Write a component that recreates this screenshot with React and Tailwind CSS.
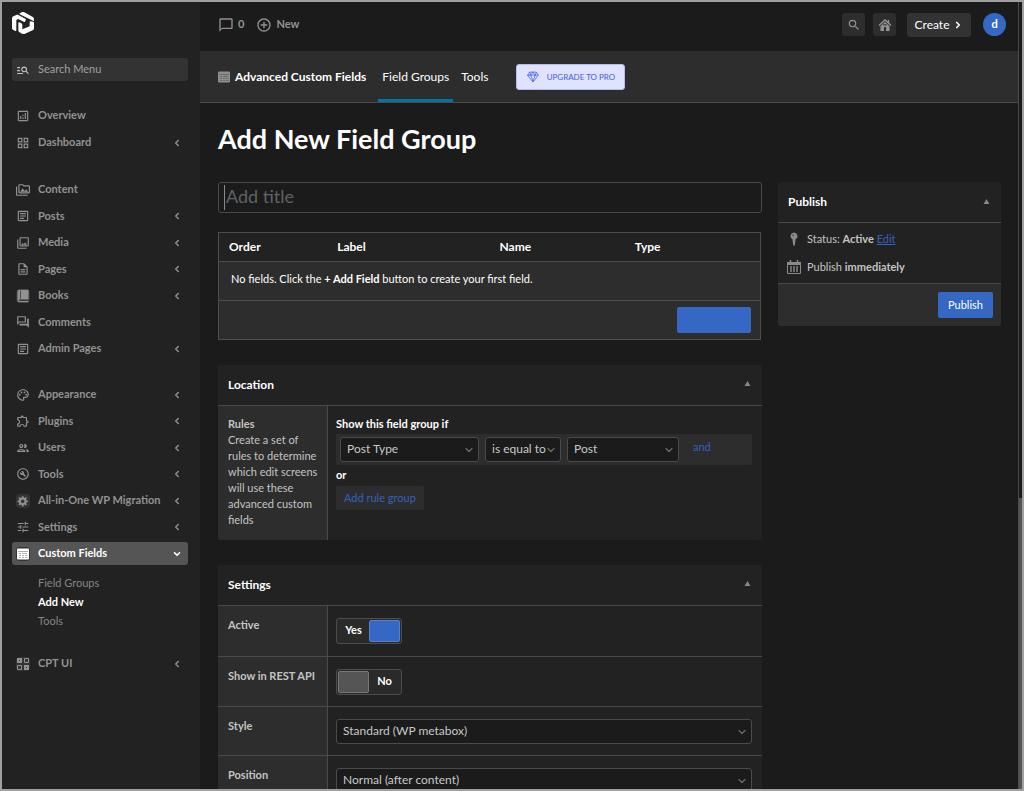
import React from "react";
import {
  MdManageSearch,
  MdOutlineAnalytics,
  MdGridView,
  MdOutlinePermMedia,
  MdOutlineArticle,
  MdOutlinePhotoLibrary,
  MdOutlineDescription,
  MdOutlineForum,
  MdOutlinePalette,
  MdOutlineExtension,
  MdOutlinePeople,
  MdOutlineBuildCircle,
  MdTune,
  MdChatBubbleOutline,
  MdAddCircleOutline,
  MdSearch,
} from "react-icons/md";
import { IoDiamondOutline } from "react-icons/io5";
import { ChevronLeft, ChevronDown, ChevronRight } from "lucide-react";

function Logo() {
  return (
    <svg viewBox="0 0 66 66" className="h-[22px] w-[22px]" fill="#fff" aria-hidden="true">
      <path d="M0 20c0-3 1-5 4-7l9-4c2-1 4-1 6 0l21 11c2 1 2 3 1 5l-2 4c-1 1-2 1-4 0L18 21l-5 3v31c0 2-1 3-3 2l-6-3c-3-2-4-4-4-7z" />
      <path d="M23 4l6-3c3-1 5-1 8 0l24 13c3 2 5 4 5 8v3c0 2-1 2-3 1L23 7c-1-1-1-2 0-3z" />
      <path d="M66 32v15c0 4-1 6-4 8L39 65c-3 2-6 2-9 0l-7-4c-3-2-4-4-4-8V33c0-2 1-3 3-2l6 3c2 1 3 3 3 6v12l22-9V30c0-2 1-3 3-2l7 1c2 0 3 1 3 3z" />
    </svg>
  );
}

function BookIcon() {
  return (
    <svg viewBox="0 0 20 20" className="h-3.5 w-3.5" fill="currentColor" aria-hidden="true">
      <path d="M5 17h13v2H5c-1.66 0-3-1.34-3-3V4c0-1.66 1.34-3 3-3h13v14H5c-.55 0-1 .45-1 1s.45 1 1 1zm2-3.5v-11c0-.28-.22-.5-.5-.5s-.5.22-.5.5v11c0 .28.22.5.5.5s.5-.22.5-.5z" />
    </svg>
  );
}

function GearIcon() {
  return (
    <svg viewBox="0 0 20 20" className="h-3 w-3" fill="currentColor" aria-hidden="true">
      <path d="M18 12h-2.18c-.17.7-.44 1.35-.81 1.93l1.54 1.54-2.1 2.1-1.54-1.54c-.58.36-1.23.63-1.91.79V19H8v-2.18c-.68-.16-1.33-.43-1.91-.79l-1.54 1.54-2.12-2.12 1.54-1.54c-.36-.58-.63-1.23-.79-1.91H1V9.03h2.17c.16-.7.44-1.35.8-1.94L2.43 5.55l2.1-2.1 1.54 1.54c.58-.37 1.24-.64 1.93-.81V2h3v2.18c.68.16 1.33.43 1.91.79l1.54-1.54 2.12 2.12-1.54 1.54c.36.59.64 1.24.8 1.94H18V12zm-8.5 1.5c1.66 0 3-1.34 3-3s-1.34-3-3-3-3 1.34-3 3 1.34 3 3 3z" />
    </svg>
  );
}

function FieldsIcon() {
  return (
    <svg viewBox="0 0 12 12" className="h-3 w-3 shrink-0" aria-hidden="true">
      <rect width="12" height="11" y=".5" rx="1" fill="currentColor" />
      <g stroke="#222" strokeOpacity=".45">
        <path d="M1 3.5h10M2 5.5h2M5 5.5h5M2 7.5h2M5 7.5h2M2 9.5h2M5 9.5h2M8 7.5h2.5M8 9.5h2.5" strokeWidth=".8" />
      </g>
    </svg>
  );
}

function BlocksIcon() {
  return (
    <svg viewBox="0 0 12 12" className="h-3 w-3" aria-hidden="true">
      <path d="M0 0h5v5H0zM7 7h5v5H7z" fill="currentColor" />
      <path d="M7.5.5h4v4h-4zM.5 7.5h4v4h-4z" fill="none" stroke="currentColor" />
      <path d="M2 2.5h1M9 9.5h1" stroke="#333" />
    </svg>
  );
}

function HomeIcon() {
  return (
    <svg viewBox="0 0 20 20" className="h-3.5 w-3.5" fill="currentColor" aria-hidden="true">
      <path d="M10 1.5l4 3.6V3h2v3.9l3.3 3-1.3 1.4L10 4.2 2 11.3.7 9.9z" />
      <path d="M10 5.8l6.5 5.9v6.8h-5V13h-3v5.500h-5v-6.800z" />
      <path d="M7.5 9h5v1.5h-5z" fill="#2a2a2a" />
    </svg>
  );
}

function PinIcon() {
  return (
    <svg viewBox="0 0 14 14" className="h-3.5 w-3.5" fill="#8a8a8a" aria-hidden="true">
      <path d="M7 .5a3.5 3.5 0 0 1 1.6 6.6L7.8 13.5H6.2L5.4 7.1A3.5 3.5 0 0 1 7 .5z" />
      <circle cx="6.2" cy="3.2" r="1" fill="#555" />
    </svg>
  );
}

function CalendarIcon() {
  return (
    <svg viewBox="0 0 14 14" className="h-3.5 w-3.5" aria-hidden="true">
      <path d="M.5 4.5h13v9H.5z" fill="none" stroke="#8a8a8a" />
      <path d="M0 2h14v2.5H0z" fill="#8a8a8a" />
      <path d="M3.5 0v3M10.5 0v3" stroke="#8a8a8a" strokeWidth="1.5" />
      <path d="M4 6v6M7 6v6M10 6v6" stroke="#8a8a8a" strokeWidth="1.4" />
    </svg>
  );
}

const boxed = "flex h-3.5 w-3.5 items-center justify-center rounded-sm bg-[#343434]";

const md = (Icon) => <Icon className="h-3.5 w-3.5" />;

const groups = [
  {
    height: "h-[50px] mt-[23px]",
    items: [
      { label: "Overview", icon: md(MdOutlineAnalytics) },
      { label: "Dashboard", icon: md(MdGridView), more: true },
    ],
  },
  {
    height: "h-[182px] mt-6",
    items: [
      { label: "Content", icon: md(MdOutlinePermMedia) },
      { label: "Posts", icon: md(MdOutlineArticle), more: true },
      { label: "Media", icon: md(MdOutlinePhotoLibrary), more: true },
      { label: "Pages", icon: md(MdOutlineDescription), more: true },
      { label: "Books", icon: <span className={boxed}><BookIcon /></span>, more: true },
      { label: "Comments", icon: md(MdOutlineForum) },
      { label: "Admin Pages", icon: md(MdOutlineArticle), more: true },
    ],
  },
  {
    height: "h-[182px] mt-[23px]",
    items: [
      { label: "Appearance", icon: md(MdOutlinePalette), more: true },
      { label: "Plugins", icon: md(MdOutlineExtension), more: true },
      { label: "Users", icon: md(MdOutlinePeople), more: true },
      { label: "Tools", icon: md(MdOutlineBuildCircle), more: true },
      { label: "All-in-One WP Migration", icon: <span className={boxed}><GearIcon /></span>, more: true },
      { label: "Settings", icon: md(MdTune), more: true },
      { label: "Custom Fields", icon: <span className="flex h-3.5 w-3.5 items-center justify-center rounded-sm bg-[#333] text-white"><FieldsIcon /></span>, active: true },
    ],
  },
];

function NavItem({ label, icon, more, active }) {
  return (
    <li>
      <a
        href="#"
        className={`flex h-[23px] items-center rounded-[3px] pr-1.5 pl-1 text-[11px] font-bold ${active ? "bg-[#555] text-white" : "text-[#929292]"}`}
      >
        <span className="flex w-[22px] shrink-0 items-center">{icon}</span>
        <span className="flex-1 whitespace-nowrap">{label}</span>
        {more && <ChevronLeft className="h-2.5 w-2.5" strokeWidth={3.5} />}
        {active && <ChevronDown className="h-2.5 w-2.5" strokeWidth={4} />}
      </a>
    </li>
  );
}

function Sidebar() {
  return (
    <aside className="w-[198px] shrink-0 bg-[#222] pt-2.5 pr-3 pl-2.5">
      <a href="#" aria-label="Home" className="block w-[22px]"><Logo /></a>
      <label className="mt-6 flex h-[23px] items-center rounded-[3px] bg-[#333] pl-1 text-[#c4c4c4]">
        <span className="flex w-[22px] shrink-0"><MdManageSearch className="h-3.5 w-3.5" /></span>
        <input
          type="search"
          aria-label="Search Menu"
          placeholder="Search Menu"
          className="w-full min-w-0 bg-transparent text-[11px] outline-none placeholder:text-[#a0a0a0]"
        />
      </label>
      <nav>
        {groups.map((g) => (
          <ul key={g.items[0].label} className={`flex flex-col justify-between ${g.height}`}>
            {g.items.map((item) => <NavItem key={item.label} {...item} />)}
          </ul>
        ))}
        <ul className="mt-2 pl-[26px] text-[11px] leading-[19px] text-[#858585]">
          <li><a href="#">Field Groups</a></li>
          <li><a href="#" className="font-bold text-white">Add New</a></li>
          <li><a href="#">Tools</a></li>
        </ul>
        <ul className="mt-[22px]">
          <NavItem label="CPT UI" icon={<span className={boxed}><BlocksIcon /></span>} more />
        </ul>
      </nav>
    </aside>
  );
}

function TopBar() {
  return (
    <header className="flex h-[49px] shrink-0 items-center pr-3 pb-1 pl-[18px] text-[12px] font-bold text-[#929292]">
      <a href="#" className="flex items-center gap-1 text-[11px]"><MdChatBubbleOutline className="h-4 w-4" />0</a>
      <a href="#" className="ml-3 flex items-center gap-1 text-[11px]"><MdAddCircleOutline className="h-4 w-4" />New</a>
      <div className="ml-auto flex items-center">
        <button type="button" aria-label="Search" className="flex h-[23px] w-[23px] items-center justify-center rounded-[3px] bg-[#2d2d2d]"><MdSearch className="h-3.5 w-3.5" /></button>
        <a href="#" aria-label="Visit site" className="ml-2 flex h-[23px] w-[23px] items-center justify-center rounded-[3px] bg-[#2d2d2d]"><HomeIcon /></a>
        <button type="button" className="ml-[11px] flex h-6 w-16 items-center justify-center gap-1 rounded-[3px] bg-[#333] font-normal text-white">
          Create <ChevronRight className="h-2.5 w-2.5" strokeWidth={4} />
        </button>
        <button type="button" aria-label="Account" className="ml-3 flex h-[23px] w-[23px] items-center justify-center rounded-full bg-[#3568c4] text-[11px] text-white">d</button>
      </div>
    </header>
  );
}

function PluginBar() {
  return (
    <div className="flex h-[52px] shrink-0 items-center border-b border-[#4a4a4a] bg-[#2d2d2d] pl-[18px] text-[12px] text-white">
      <span className="text-[#8f8f8f]"><FieldsIcon /></span>
      <h2 className="ml-[5px] font-bold">Advanced Custom Fields</h2>
      <a href="#" className="ml-3 flex h-full items-center border-b-3 border-[#0873a3] px-1 pt-[3px]">Field Groups</a>
      <a href="#" className="ml-1 px-1">Tools</a>
      <a href="#" className="ml-6 flex h-[26px] w-[109px] items-center justify-center gap-2 rounded-[3px] border border-[#b4bdf0] bg-[#dfe3ff] text-[8px] text-[#4560e0]">
        <IoDiamondOutline className="h-3 w-3" />
        UPGRADE TO PRO
      </a>
    </div>
  );
}

function Panel({ title, children }) {
  return (
    <section className="overflow-hidden rounded-[3px] bg-[#222]">
      <div className="flex h-[41px] items-center justify-between border-b border-[#4a4a4a] pr-[11px] pl-2.5">
        <h2 className="text-[12px] font-bold text-white">{title}</h2>
        <button type="button" aria-label={`Toggle panel: ${title}`} className="pb-0.5 text-[#85888c]">
          <svg viewBox="0 0 7 6" className="h-[5px] w-[7px]" fill="currentColor" aria-hidden="true"><path d="M3.5 0L7 6H0z" /></svg>
        </button>
      </div>
      {children}
    </section>
  );
}

function SelectBox({ label, value, className }) {
  return (
    <span className={`relative block ${className}`}>
      <select aria-label={label} defaultValue={value} className="block h-[25px] w-full appearance-none rounded-[3px] border border-[#4a4a4a] bg-[#1b1b1b] pl-1.5 text-[12px] text-[#c8c8c8]">
        <option>{value}</option>
      </select>
      <ChevronDown className="pointer-events-none absolute top-[7px] right-1 h-3 w-3 text-[#6a6a6a]" strokeWidth={2.5} />
    </span>
  );
}

function FieldTable() {
  return (
    <div className="mt-[19px] mr-px border border-[#4d4d4d] bg-[#2d2d2d] text-[12px] text-white">
      <table className="w-full table-fixed border-collapse text-left">
        <thead className="bg-[#222]">
          <tr className="h-7 border-b border-[#4d4d4d]">
            <th className="w-1/5 pl-2.5 font-bold">Order</th>
            <th className="w-[30%] pl-2.5 font-bold">Label</th>
            <th className="w-1/4 pl-2.5 font-bold">Name</th>
            <th className="w-1/4 pl-2.5 font-bold">Type</th>
          </tr>
        </thead>
        <tbody>
          <tr className="h-[39px] border-b border-[#4d4d4d]">
            <td colSpan={4} className="pb-0.5 pl-3 text-[11px]">No fields. Click the <strong>+ Add Field</strong> button to create your first field.</td>
          </tr>
        </tbody>
      </table>
      <div className="flex h-[38px] items-center justify-end pr-[9px]">
        <button type="button" aria-label="Add Field" className="h-[26px] w-[74px] rounded-[2px] bg-[#3568c4]" />
      </div>
    </div>
  );
}

function Toggle({ label, on }) {
  return (
    <label className="flex h-[26px] w-[66px] items-center rounded-[3px] border border-[#4d4d4d] bg-[#2a2a2a] p-px text-[11px] text-white">
      <input type="checkbox" role="switch" aria-label={label} defaultChecked={on} className="sr-only" />
      {on && <span className="flex-1 text-center font-bold">Yes</span>}
      <span className={`h-full w-[31px] rounded-[2px] border ${on ? "border-[#5580cc] bg-[#3568c4]" : "border-[#777] bg-[#555]"}`} />
      {!on && <span className="flex-1 text-center font-bold">No</span>}
    </label>
  );
}

function SettingRow({ label, children, height }) {
  return (
    <div className={`flex border-b border-[#4a4a4a] ${height}`}>
      <div className="w-[110px] shrink-0 border-r border-[#4a4a4a] bg-[#2d2d2d] pt-[11px] pl-2.5 text-[11px] leading-4 font-bold whitespace-nowrap text-[#c4c4c4]">{label}</div>
      <div className="flex-1 pt-3 pr-2.5 pl-2">{children}</div>
    </div>
  );
}

function LocationPanel() {
  return (
    <Panel title="Location">
      <div className="flex">
        <div className="w-[110px] shrink-0 border-r border-[#4a4a4a] bg-[#2d2d2d] pt-2.5 pr-1.5 pb-3 pl-2.5 text-[11px] leading-4 text-[#c4c4c4]">
          <h3 className="font-bold">Rules</h3>
          <p>Create a set of rules to determine which edit screens will use these advanced custom fields</p>
        </div>
        <div className="flex-1 pt-2.5 pr-2.5 pl-2 text-[11px] leading-4 text-white">
          <h4 className="font-bold">Show this field group if</h4>
          <div className="mt-0.5 flex h-[31px] items-center gap-1.5 rounded-[2px] bg-[#2d2d2d] pl-1">
            <SelectBox label="Parameter" value="Post Type" className="w-[139px]" />
            <SelectBox label="Operator" value="is equal to" className="w-[76px]" />
            <SelectBox label="Value" value="Post" className="w-28" />
            <button type="button" className="ml-2 pb-1 text-[#3561bd]">and</button>
          </div>
          <h4 className="mt-0.5 font-bold">or</h4>
          <button type="button" className="mt-[3px] h-6 rounded-[2px] bg-[#2d2d2d] px-2 text-[#3561bd]">Add rule group</button>
        </div>
      </div>
    </Panel>
  );
}

function SettingsPanel() {
  return (
    <Panel title="Settings">
      <SettingRow label="Active" height="h-[51px]"><Toggle label="Active" on /></SettingRow>
      <SettingRow label="Show in REST API" height="h-[50px]"><Toggle label="Show in REST API" /></SettingRow>
      <SettingRow label="Style" height="h-[49px]"><SelectBox label="Style" value="Standard (WP metabox)" className="w-full" /></SettingRow>
      <SettingRow label="Position" height="h-[49px]"><SelectBox label="Position" value="Normal (after content)" className="w-full" /></SettingRow>
    </Panel>
  );
}

function PublishPanel() {
  return (
    <Panel title="Publish">
      <div className="flex h-[61px] flex-col justify-between border-b border-[#4a4a4a] px-[9px] py-2 text-[11px] leading-4 text-[#c4c4c4]">
        <p className="flex items-center gap-1.5"><PinIcon /><span>Status: <strong>Active</strong> <a href="#" className="text-[#3561bd] underline">Edit</a></span></p>
        <p className="flex items-center gap-1.5"><CalendarIcon /><span>Publish <strong>immediately</strong></span></p>
      </div>
      <div className="flex h-[42px] items-center justify-end bg-[#2d2d2d] px-2">
        <button type="button" className="h-[26px] w-[55px] rounded-[2px] bg-[#3568c4] text-[11px] text-white">Publish</button>
      </div>
    </Panel>
  );
}

export default function App() {
  return (
    <div className="flex h-screen overflow-hidden border-2 border-[#a0a0a0] bg-[#1b1b1b] font-['Lato','Open_Sans',sans-serif]">
      <Sidebar />
      <div className="flex min-w-0 flex-1 flex-col overflow-hidden">
        <TopBar />
        <PluginBar />
        <main className="pt-[18px] pr-[17px] pl-[18px]">
          <h1 className="text-[27px] leading-9 font-bold text-white">Add New Field Group</h1>
          <div className="mt-[25px] flex items-start gap-4">
            <div className="min-w-0 flex-1">
              <div className="relative">
                <input
                  type="text"
                  aria-label="Add title"
                  placeholder="Add title"
                  className="block h-[31px] w-full rounded-[3px] border border-[#484848] bg-transparent px-[7px] pb-1 text-[18px] text-white outline-none placeholder:text-[#5f6266]"
                />
                <span aria-hidden="true" className="absolute top-[3px] left-1.5 h-[25px] w-px bg-[#8a8a8a]" />
              </div>
              <FieldTable />
              <div className="mt-[25px] flex flex-col gap-[25px]">
                <LocationPanel />
                <SettingsPanel />
              </div>
            </div>
            <aside className="w-[223px] shrink-0"><PublishPanel /></aside>
          </div>
        </main>
      </div>
      <div aria-hidden="true" className="w-1 shrink-0 border-l border-[#4a4a4a] bg-[#555]">
        <div className="h-[63%] bg-[#1b1b1b]" />
      </div>
    </div>
  );
}
